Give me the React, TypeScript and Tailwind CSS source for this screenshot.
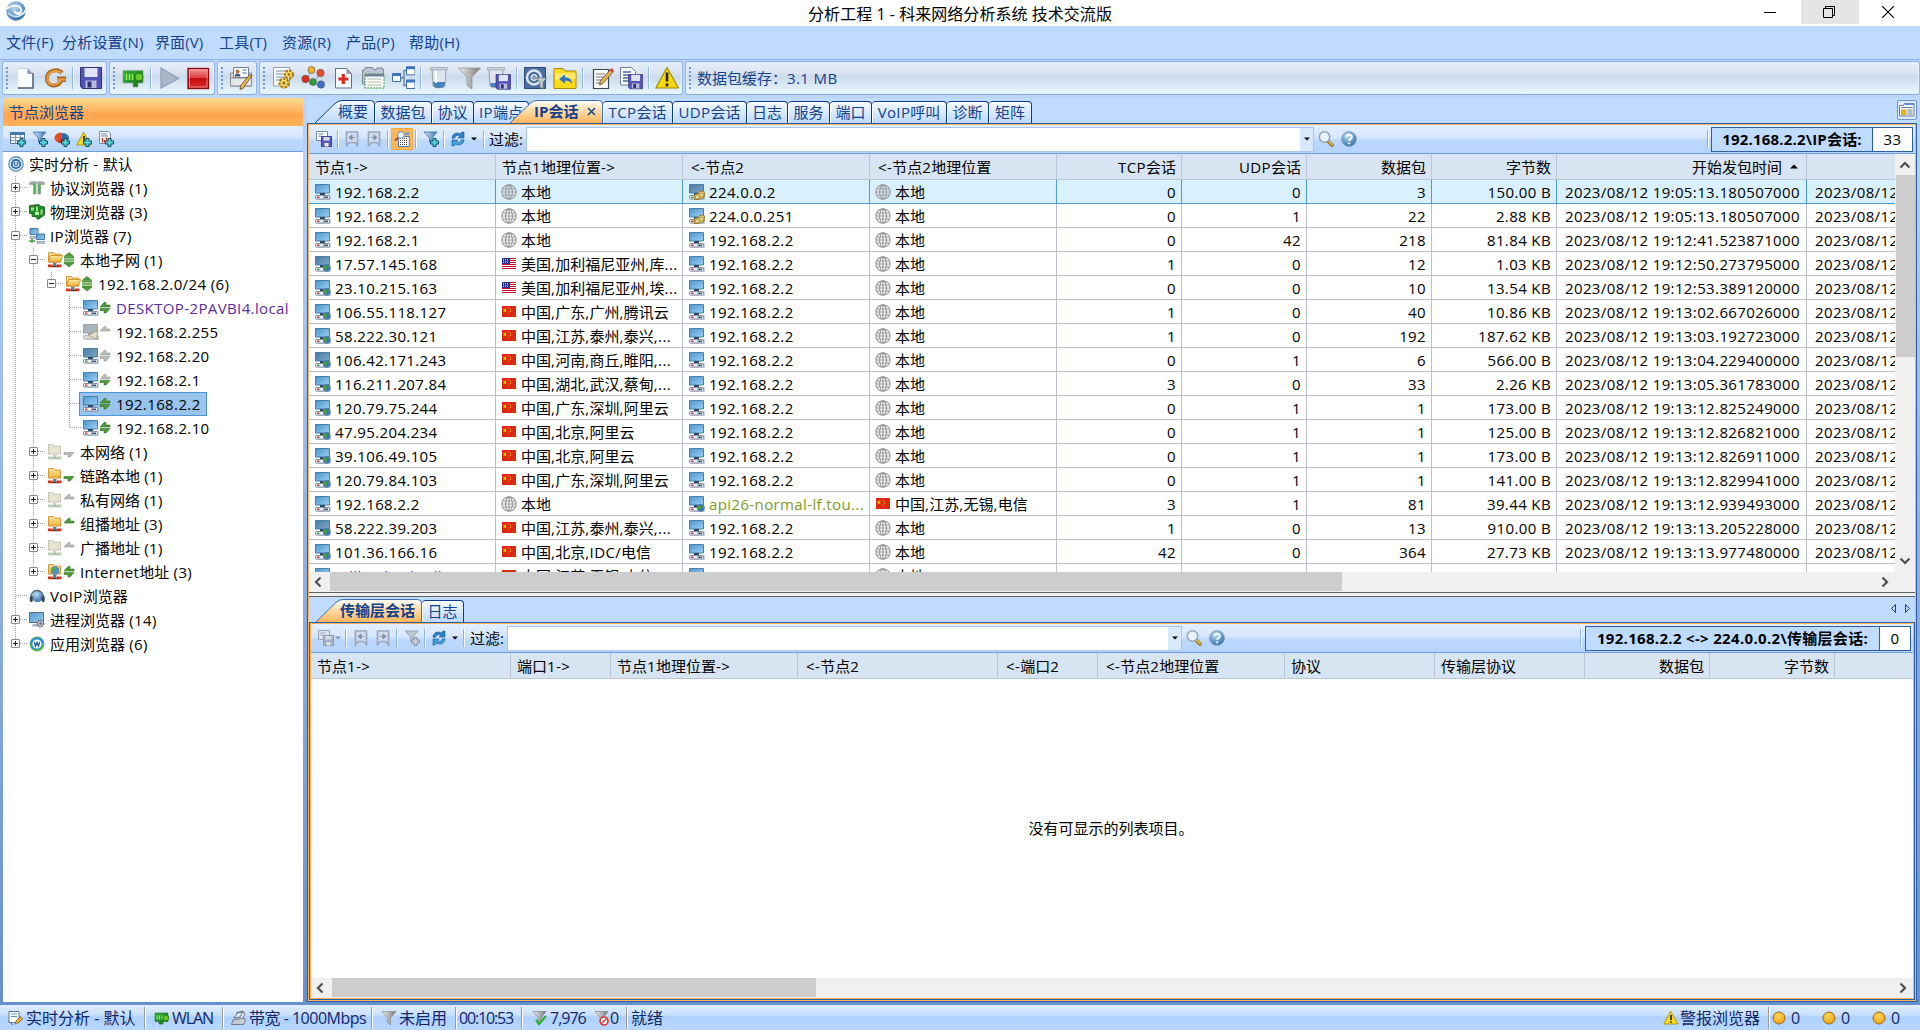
import React from 'react';

type P = { children?: React.ReactNode; className?: string };

/* Text run: Latin parts get slightly wider spacing than the CJK parts. */
function T({ children, className = '' }: { children: string; className?: string }) {
  const parts = children.match(/[\x20-\x7e]+|[^\x20-\x7e]+/g) || [];
  return (
    <span className={'whitespace-pre ' + className}>
      {parts.map((p, i) => (
        <span key={i} className={/[\x20-\x7e]/.test(p) ? 'tracking-[0.38px]' : ''}>{p}</span>
      ))}
    </span>
  );
}

const S16 = ({ children, className = '' }: P) => (
  <svg width="16" height="16" viewBox="0 0 16 16" className={'block shrink-0 ' + className}>{children}</svg>
);
const S24 = ({ children, className = '' }: P) => (
  <svg width="24" height="24" viewBox="0 0 24 24" className={'block shrink-0 ' + className}>{children}</svg>
);

function Defs() {
  return (
    <svg width="0" height="0" className="absolute">
      <defs>
        <linearGradient id="scr" x1="0" y1="0" x2="1" y2="1"><stop offset="0" stopColor="#4f97cc" /><stop offset="1" stopColor="#9ad0f5" /></linearGradient>
        <linearGradient id="scrDim" x1="0" y1="0" x2="1" y2="1"><stop offset="0" stopColor="#4a7ba3" /><stop offset="1" stopColor="#7ea9c8" /></linearGradient>
        <linearGradient id="gold" x1="0" y1="0" x2="0" y2="1"><stop offset="0" stopColor="#ffe9a0" /><stop offset="1" stopColor="#eeb035" /></linearGradient>
        <linearGradient id="red" x1="0" y1="0" x2="0" y2="1"><stop offset="0" stopColor="#f29a9a" /><stop offset=".48" stopColor="#dc3b3b" /><stop offset=".5" stopColor="#c40d12" /><stop offset="1" stopColor="#dd2b2b" /></linearGradient>
        <linearGradient id="tabO" x1="0" y1="0" x2="0" y2="1"><stop offset="0" stopColor="#fff" /><stop offset=".4" stopColor="#ffdfb0" /><stop offset="1" stopColor="#ffb65c" /></linearGradient>
        <linearGradient id="tabB" x1="0" y1="0" x2="0" y2="1"><stop offset="0" stopColor="#f2f8ff" /><stop offset="1" stopColor="#bcd9ff" /></linearGradient>
        <linearGradient id="fun" x1="0" y1="0" x2="1" y2="0"><stop offset="0" stopColor="#eee" /><stop offset="1" stopColor="#777" /></linearGradient>
        <linearGradient id="funB" x1="0" y1="0" x2="1" y2="0"><stop offset="0" stopColor="#d6ecff" /><stop offset="1" stopColor="#3b6fb0" /></linearGradient>
        <radialGradient id="orb" cx=".45" cy=".35" r=".7"><stop offset="0" stopColor="#ffd860" /><stop offset="1" stopColor="#f39a00" /></radialGradient>
        <radialGradient id="blu" cx=".4" cy=".3" r=".75"><stop offset="0" stopColor="#b7dcf6" /><stop offset="1" stopColor="#2f6ba8" /></radialGradient>
        <linearGradient id="card" x1="0" y1="0" x2="1" y2="1"><stop offset="0" stopColor="#35b53a" /><stop offset="1" stopColor="#0d6e16" /></linearGradient>
      </defs>
    </svg>
  );
}

/* ---------- small icons ---------- */
type PcKind = '' | 'dim' | 'globe' | 'dimglobe' | 'group' | 'dimgroup' | 'speaker';
function Pc({ k = '' }: { k?: PcKind }) {
  const gray = k === 'speaker';
  const dim = k.startsWith('dim');
  return (
    <S16>
      <path d="M3 11h13v5H3z" fill="#9aa3ad" opacity=".45" />
      <path d="M.5.5h14V9H.5z" fill={gray ? '#a9b3bd' : dim ? 'url(#scrDim)' : 'url(#scr)'} stroke={gray ? '#9aa4ae' : '#4b7ea8'} />
      <path d="M5 9h5v2.500H5z" fill={gray ? '#a0a0a0' : '#2f4a68'} />
      <rect x=".5" y="11.500" width="14" height="3.500" rx=".6" fill={gray ? '#dcdcdc' : '#f1f4f9'} stroke={gray ? '#b5b5b5' : '#7d8da6'} />
      {!gray && <><rect x="2" y="12.500" width="2.500" height="1.500" fill={dim ? '#3da04a' : '#e0362b'} /><rect x="8.500" y="12.500" width="4.500" height="1.500" fill="#43546e" /></>}
      {k.endsWith('globe') && <><circle cx="11.800" cy="11.800" r="3.700" fill="#3a74b8" stroke="#6a90b8" strokeWidth=".5" /><path d="M9 10c2-2 3 0 3 1s-1 3-2 3.500c-1-1-2-3-1-4.500zM13 9c2 1 2 3 1 4z" fill="#43a03c" /></>}
      {k.endsWith('group') && <><path d="M5 11.500l2-1.500 2 0 1.500-2.500 4-.5 1.300 2-.8 4.500-3.500.8-1.500 1.200H5.500z" fill="#e3c868" stroke="#8f6f1c" strokeWidth=".8" /><path d="M6.500 12h3.500v2.500H6.500zM11 9.500h3.500V12H11z" fill="#fff3b8" stroke="#957420" strokeWidth=".6" /></>}
      {gray && <path d="M7 9.500h2.500L14 6v10l-4.500-3H7z" fill="#e4ddc6" stroke="#988f78" strokeWidth=".7" />}
    </S16>
  );
}
const FolderNet = ({ off, net, open }: { off?: boolean; net?: boolean; open?: boolean }) => (
  <S16>
    <path d="M1.500.6h5l1 1.500h6v8h-12z" fill={off ? '#e6e2d4' : 'url(#gold)'} stroke={off ? '#c4bfae' : '#cf8d2c'} strokeWidth=".9" />
    {open && <path d="M1.500 10l2-6.500h12l-2 6.500z" fill="url(#gold)" stroke="#cf8d2c" strokeWidth=".9" />}
    {net && <><circle cx="8" cy="6.500" r="4" fill="#4a8fd0" stroke="#5c7fa8" strokeWidth=".5" /><path d="M5 5c1-2 4-2 4-1s-2 2-1.500 4c-1.500 1-3-1-2.500-3z" fill="#4bae4a" /></>}
    <rect x="6" y="11" width="3.500" height="3" fill={off ? '#c3cabf' : '#6d7c8d'} />
    <path d="M1 12.500h4.500v2.700H1zM10 12.500h4.500v2.700H10z" fill={off ? '#b4ccb0' : '#e02b1f'} />
    <path d="M5 14.500h5.500" stroke={off ? '#a5b8a2' : '#58392f'} strokeWidth="1.400" />
  </S16>
);
type Arr = 'gg' | 'u-' | 'uu' | 'ug' | '-g' | '-n' | 'g-' | 'G';
function Arrows({ a }: { a: Arr }) {
  const up = a === 'G' ? 'g' : a[0];
  const dn = a === 'G' ? 'g' : a[1];
  const c = (x: string) => (x === 'g' ? '#4f9a38' : '#b9bcb7');
  const one = a === 'G';
  return (
    <svg width="12" height="16" viewBox="0 0 12 16" className="block shrink-0">
      {one ? (
        <><path d="M6 .5L11 4.500H1zM6 15L1 11h10z" fill="#4f9a38" stroke="#2f7522" strokeWidth=".5" /><path d="M1 5.700h10M1 8h10M1 10.200h10" stroke="#4f9a38" strokeWidth="1.500" /></>
      ) : (
        <>
          {up !== '-' && <path d="M1 7l4-4.500h2V5h4v2z" fill={c(up)} stroke={up === 'g' ? '#2f7522' : '#999'} strokeWidth=".6" />}
          {dn !== '-' && <path d="M11 8.500L7 13H5v-2.500H1v-2z" fill={c(dn)} stroke={dn === 'g' ? '#2f7522' : '#999'} strokeWidth=".6" />}
        </>
      )}
    </svg>
  );
}
const Globe = () => (
  <S16><g fill="none" stroke="#9b9b9b" strokeWidth="1.150"><circle cx="8" cy="8" r="7.200" /><ellipse cx="8" cy="8" rx="3.400" ry="7.200" /><path d="M8 1v14M2 5h12M1 8h14M2 11h12" /></g></S16>
);
const Cn = () => (
  <S16><rect x="1" y="2" width="14" height="11" fill="#de2910" /><path d="M4 4l.6 1.500 1.600.1-1.200 1 .4 1.600L4 7.300l-1.400.9.400-1.600-1.200-1 1.600-.1z" fill="#ffd400" /><path d="M7.500 3.500h1v1h-1zM9 5h1v1H9zM9 7h1v1H9zM7.500 8.500h1v1h-1z" fill="#f3a712" /></S16>
);
const Us = () => (
  <S16><rect x="1" y="2" width="14" height="11" fill="#fff" /><path d="M1 2.500h14M1 4.500h14M1 6.500h14M1 8.500h14M1 10.500h14M1 12.500h14" stroke="#c8102e" /><rect x="1" y="2" width="8" height="6" fill="#1f2c8c" /><path d="M2 3.500h6M2 5h6M2 6.500h6" stroke="#fff" strokeWidth=".7" strokeDasharray="1 1" /></S16>
);
const Plus = ({ x = 8, y = 8, gray }: { x?: number; y?: number; gray?: boolean }) => (
  <path transform={`translate(${x} ${y})`} d="M2.500 0h3v2.500H8v3H5.500V8h-3V5.500H0v-3h2.500z" fill={gray ? '#c4ccd8' : '#58d0d8'} stroke={gray ? '#8590a3' : '#0b4f66'} strokeWidth="1" />
);
const FunnelPlus = ({ gray }: { gray?: boolean }) => (
  <S16><path d="M1 1h13L9 7v6l-2.500-2V7z" fill={gray ? '#bcc6d5' : 'url(#funB)'} stroke={gray ? '#94a0b5' : '#4176b5'} strokeWidth=".9" /><Plus x={7.500} y={7.500} gray={gray} /></S16>
);
const TablePlus = () => (
  <S16><path d="M.5 1.500h14v11H.5z" fill="#fff" stroke="#54779f" /><path d="M.5 1.500h14v2.500H.5z" fill="#3f78b5" /><path d="M.5 6.500h14M.5 9.500h14M5.500 4v8M10.500 4v8" stroke="#7794b5" strokeWidth=".9" /><Plus x={7.500} y={7.500} /></S16>
);
const PiePlus = () => (
  <S16><ellipse cx="8" cy="7" rx="7" ry="5" fill="#2e6cb5" /><path d="M8 7V2C4 1 .5 4 .5 7c0 2 2 4 4 4.500z" fill="#e34a26" /><path d="M8 7L4 11.500c2 .6 4 .6 6 0z" fill="#b02a10" /><Plus x={7.500} y={7.500} /></S16>
);
const WarnShape = () => (
  <><path d="M7.500 1.200L15 14H.8z" fill="#f7dc1b" stroke="#a89400" strokeWidth=".9" strokeLinejoin="round" /><path d="M8 5v5M8 11.300v1.400" stroke="#222" strokeWidth="1.700" /></>
);
const WarnPlus = () => <S16><WarnShape /><Plus x={7.500} y={7.500} /></S16>;
const ReportPlus = () => (
  <S16><path d="M1.500.5h9l2 2v10h-11z" fill="#f3f7fc" stroke="#7a8da8" /><path d="M3 3h6M3 5h7" stroke="#7a8da8" /><path d="M4.500 7v4.500M6.500 9v2.500M8.500 6.500v5" stroke="#c0392b" strokeWidth="1.300" /><Plus x={7.500} y={7.500} /></S16>
);
const SaveList = ({ gray }: { gray?: boolean }) => (
  <S16><path d="M.5.5h11v9H.5z" fill={gray ? '#dde4ee' : '#fff'} stroke={gray ? '#99a6ba' : '#7186a5'} /><path d="M2.500 3h5M2.500 5.200h3" stroke={gray ? '#99a6ba' : '#6f88a9'} /><path d="M5.500 5.500H15.500v10H5.500z" fill={gray ? '#a5b0c3' : '#5a5bb8'} stroke={gray ? '#8793a9' : '#33357f'} strokeWidth=".9" /><path d="M7.500 6h6v3.500h-6z" fill={gray ? '#d7deea' : '#d6dcf5'} /><path d="M8.500 12h4v3.500h-4z" fill={gray ? '#d7deea' : '#eef'} /></S16>
);
const Bookmark = ({ r }: { r?: boolean }) => (
  <S16><path d="M2.500 1h11v13.500l-3-3h-5l-3 3z" fill="#d2deef" stroke="#9aa7bd" strokeWidth="1.700" /><path d={r ? 'M5 6.500h4M8 4l3 2.500L8 9z' : 'M11 6.500H7M8 4L5 6.500 8 9z'} fill="#7f8ca5" stroke="#7f8ca5" strokeWidth=".9" /></S16>
);
const SearchTable = () => (
  <S16><path d="M4.500 5.500h10.800v10H4.500z" fill="#fff" stroke="#4e77b0" /><path d="M6 7.500h8M6 9.500h8M6 11.500h8M6 13.500h8" stroke="#444" strokeDasharray="1 1" /><path d="M11 1.500h4.500V4H11z" fill="#6ba0de" /><path d="M4.500 6.500L1 9.500" stroke="#8a5a20" strokeWidth="2" /><circle cx="7" cy="4" r="3.300" fill="#e3f1fd" stroke="#8d9cb0" strokeWidth="1.200" /></S16>
);
const Refresh = () => (
  <S16><path d="M2 7.200C2 3 6.500.8 10.300 2.700L12 1h2v6H8l1.800-1.900C7.500 3.900 5.200 4.800 4.600 7.200z" fill="#2d82c9" stroke="#17598f" strokeWidth=".6" /><path d="M14 8.800c0 4.200-4.500 6.400-8.300 4.500L4 15H2V9h6l-1.800 1.900c2.300 1.200 4.600.3 5.200-2.100z" fill="#3fa0dd" stroke="#17598f" strokeWidth=".6" /></S16>
);
const Lens = () => (
  <S16><path d="M10 10l4 4" stroke="#8f6a1c" strokeWidth="3.600" strokeLinecap="round" /><path d="M10.500 10l3.500 3.500" stroke="#e0b848" strokeWidth="2" strokeLinecap="round" /><circle cx="6.500" cy="6" r="5.200" fill="#e9f4ff" stroke="#97a3b4" strokeWidth="1.500" /></S16>
);
const Help = () => (
  <S16><circle cx="8" cy="8" r="7.500" fill="url(#blu)" stroke="#8ba5bf" strokeWidth=".9" /><path d="M5.300 6.300c0-3.400 5.500-3.400 5.500-.2 0 2-2.600 2-2.600 4M8.200 11.400v1.800" fill="none" stroke="#fff" strokeWidth="1.900" /></S16>
);
const FunnelPlain = () => <S16><path d="M1 1.500h14L9.500 8v7L6.500 12.500V8z" fill="url(#fun)" stroke="#888" strokeWidth=".6" /></S16>;
const Card = () => (
  <S16><path d="M1 3h13v8.500H9V14H5v-2.500H1z" fill="url(#card)" stroke="#196a1c" strokeWidth=".6" /><path d="M3 5.500v4M5.500 5.500v4M8 5.500v4" stroke="#8bee4f" strokeWidth="1.200" /><circle cx="12" cy="8" r="2.700" fill="#75c81f" stroke="#1f7a12" strokeWidth=".7" /></S16>
);

/* ---------- tree ---------- */
const icoAnalysis = (
  <S16><circle cx="8" cy="8" r="7.200" fill="#cfe3f5" stroke="#6f9bc8" strokeWidth="1.400" /><circle cx="8" cy="8" r="4.200" fill="none" stroke="#2d68a8" strokeWidth="1.800" /><path d="M6.500 5.500V8a1.500 1.500 0 003 0V5.500" stroke="#2d68a8" strokeWidth="1.200" fill="none" /></S16>
);
const icoProto = (
  <S16><path d="M.5 3C3 1 6 1.500 7 3v11H4.500V6c0-1.500-1-2-4-1.500zM15.500 3C13 1 10 1.500 9 3v11h2.500V6c0-1.500 1-2 4-1.500z" fill="#55b45c" stroke="#8a938c" strokeWidth=".7" /><path d="M.5 2.500c3-1.500 12-1.500 15 0v1.800c-3-1-12-1-15 0z" fill="#a5aba7" /></S16>
);
const icoPhys = (
  <S16><path d="M.5 1.500L10 .5l1 1.500 4.500 1v8L9 15.500 6 12.500H3V9.500H.5z" fill="#1f8a28" stroke="#0f5c17" strokeWidth=".8" /><path d="M2 3.500h3v3H2zM7 2.500h2v5H7zM11.500 5.500h2v5h-2z" fill="#9be07a" /><path d="M6 8h4v3H6z" fill="#bfe9ae" /><path d="M3 2h1M6 5h1" stroke="#d33" /></S16>
);
const icoIp = (
  <S16><path d="M1 .5h8v6H1z" fill="url(#scr)" stroke="#4a7ba8" /><path d="M7.500 6h8v5.500h-8z" fill="url(#scr)" stroke="#4a7ba8" /><path d="M1 8.500h6v1.800H1zM8 13.500h7.500v1.800H8z" fill="#c2cede" stroke="#70829b" strokeWidth=".6" /><path d="M0 13h6M3 10.500v4.500" stroke="#4e9e4a" strokeWidth="1.500" /></S16>
);
const icoVoip = (
  <S16><circle cx="8.500" cy="8.500" r="5.500" fill="url(#blu)" /><path d="M2 10C1 0 15 0 14.500 10" fill="none" stroke="#596470" strokeWidth="1.300" /><rect x=".8" y="8" width="3" height="6" rx="1.500" fill="#3c4754" /><rect x="12.700" y="8" width="3" height="6" rx="1.500" fill="#3c4754" /></S16>
);
const icoProc = (
  <S16><path d="M.5.5h14v10H.5z" fill="url(#scr)" stroke="#5a6f88" /><path d="M4 12h6v2.500H2.500z" fill="#aab4c0" /><circle cx="11.500" cy="11.500" r="3.200" fill="#c8ced6" stroke="#59626e" strokeWidth="1.500" strokeDasharray="1.500 .9" /><circle cx="11.500" cy="11.500" r="1.300" fill="#59626e" /></S16>
);
const icoApp = (
  <S16><circle cx="8" cy="8" r="7.400" fill="#5bb947" /><path d="M1 6C3 1 12-1 15 6l-3 6c-4 3-9 2-10-2z" fill="#2f8fd0" /><circle cx="8" cy="8" r="4.600" fill="#f4faff" /><path d="M5.300 6l1.200 4L8 6.500 9.500 10l1.200-4" fill="none" stroke="#2b5c86" strokeWidth="1.300" /></S16>
);

type Node = { g: string; icon: React.ReactNode; a?: Arr; t: string; color?: string; sel?: boolean };
/* Guide letters: I line, T branch, L last branch, + closed box, p last closed box, - open box, m last open box, blank */
const tree: Node[] = [
  { g: '', icon: icoAnalysis, t: '实时分析 - 默认' },
  { g: '+', icon: icoProto, t: '协议浏览器 (1)' },
  { g: '+', icon: icoPhys, t: '物理浏览器 (3)' },
  { g: '-', icon: icoIp, t: 'IP浏览器 (7)' },
  { g: 'I-', icon: <FolderNet open />, a: 'G', t: '本地子网 (1)' },
  { g: 'IIm', icon: <FolderNet open />, a: 'G', t: '192.168.2.0/24 (6)' },
  { g: 'II T', icon: <Pc />, a: 'gg', t: 'DESKTOP-2PAVBI4.local', color: 'text-[#5a2ca0]' },
  { g: 'II T', icon: <Pc k="speaker" />, a: 'u-', t: '192.168.2.255' },
  { g: 'II T', icon: <Pc k="dim" />, a: 'uu', t: '192.168.2.20' },
  { g: 'II T', icon: <Pc />, a: 'ug', t: '192.168.2.1' },
  { g: 'II T', icon: <Pc />, a: 'gg', t: '192.168.2.2', sel: true },
  { g: 'II L', icon: <Pc />, a: 'gg', t: '192.168.2.10' },
  { g: 'I+', icon: <FolderNet off />, a: '-n', t: '本网络 (1)' },
  { g: 'I+', icon: <FolderNet />, a: '-g', t: '链路本地 (1)' },
  { g: 'I+', icon: <FolderNet off />, a: 'u-', t: '私有网络 (1)' },
  { g: 'I+', icon: <FolderNet />, a: 'g-', t: '组播地址 (3)' },
  { g: 'I+', icon: <FolderNet off />, a: 'u-', t: '广播地址 (1)' },
  { g: 'Ip', icon: <FolderNet net />, a: 'gg', t: 'Internet地址 (3)' },
  { g: 'T', icon: icoVoip, t: 'VoIP浏览器' },
  { g: '+', icon: icoProc, t: '进程浏览器 (14)' },
  { g: 'p', icon: icoApp, t: '应用浏览器 (6)' },
];

function Guide({ c }: { c: string }) {
  const box = '+-pm'.includes(c);
  const last = 'Lpm'.includes(c);
  return (
    <svg width="18" height="24" viewBox="0 0 18 24" className="block shrink-0 overflow-visible">
      {c !== ' ' && <path d={last ? 'M9.500 0V12' : 'M9.500 0V24'} stroke="#9c9c9c" strokeDasharray="1 1" />}
      {c !== ' ' && c !== 'I' && <path d="M10 11.500H22" stroke="#9c9c9c" strokeDasharray="1 1" />}
      {box && (
        <>
          <rect x="5.500" y="7.500" width="8" height="8" rx=".5" fill="#fafafa" stroke="#8a8a8a" />
          <path d={'+p'.includes(c) ? 'M7 11.500h5M9.500 9v5' : 'M7 11.500h5'} stroke="#222" />
        </>
      )}
    </svg>
  );
}

function TreeRow({ n }: { n: Node }) {
  return (
    <div className="flex h-6 items-center pl-[3px]">
      {n.g.split('').map((c, i) => <Guide key={i} c={c} />)}
      <div className={'flex h-6 items-center border pr-[5px] ' + (n.g ? 'pl-[3px] ml-px ' : 'pl-px ') + (n.sel ? 'bg-[#99c4ec] border-[#4a98da]' : 'border-transparent')}>
        {n.icon}
        {n.a && <span><Arrows a={n.a} /></span>}
        <T className={'ml-[5px] ' + (n.color || '')}>{n.t}</T>
      </div>
    </div>
  );
}

/* ---------- main toolbar ---------- */
const Grip = () => <div className="ml-[3px] mr-[5px] h-[22px] w-[2px] bg-[repeating-linear-gradient(#6f9bd8_0_2px,transparent_2px_4px)]" />;
const Sep = () => <div className="mx-[5px] h-[22px] w-[2px] border-l border-[#8db8ee] bg-white" />;
const Group = ({ children, className = '' }: P) => (
  <div className={'flex h-[34px] items-center rounded-[3px] border border-[#8fb6e4] border-b-[#93acc8] bg-[linear-gradient(#e8effb_0%,#d7e1ef_38%,#cbdaec_45%,#dcebf7_78%,#e6f8fd_100%)] shadow-[inset_0_0_0_1px_#e3f1ff] ' + className}>{children}</div>
);
const floppy = (x: number, y: number, s: number) => (
  <g transform={`translate(${x} ${y}) scale(${s})`}><path d="M0 0h21v21H2L0 19z" fill="#5352b5" stroke="#31317c" /><path d="M4 .5h13v9H4z" fill="#dfe4f6" /><path d="M5 13h11v7.500H5z" fill="#b9bdd8" /><path d="M7 14h4v6H7z" fill="#2f3074" /></g>
);

function MainToolbar() {
  return (
    <div className="flex h-[34px] gap-[2px] pl-[2px]">
      <Group className="w-[105px]">
        <Grip />
        <S24><path d="M5 2.500h10l5 5V22H5z" fill="#fafcff" /><path d="M5 2.500h10l5 5" fill="none" stroke="#c3cddb" /><path d="M20 7v15H5" fill="none" stroke="#4f5b6c" strokeWidth="1.500" /><path d="M14.500 2.500l5.500 5.500h-5.500z" fill="#8b9aae" /></S24>
        <S24 className="ml-[6px]"><path d="M19 7C15 2 4 4 4 12.500S15 22 18.500 14H23M23 12.500h-9" fill="none" stroke="#a4631a" strokeWidth="4" /><path d="M18.500 7C14.500 3 4.500 5 4.500 12.500S14.500 21 18 13.500h4.500H14" fill="none" stroke="#e39a45" strokeWidth="2.300" /></S24>
        <Sep />
        <S24>{floppy(1.500, 1.500, 1)}</S24>
      </Group>
      <Group className="w-[106px]">
        <Grip />
        <S24 className="ml-px"><path d="M2 4.500h20v12.500h-5V21h-5v-4H2z" fill="url(#card)" stroke="#8aa58a" strokeWidth=".8" /><path d="M5.500 8v6M8.500 8v6M11.500 8v6" stroke="#8ef04c" strokeWidth="1.500" /><circle cx="18" cy="11" r="4" fill="#6cc825" stroke="#1c7a18" /></S24>
        <Sep />
        <S24><path d="M4 2l17.500 10.500L4 22z" fill="#a9b7c9" stroke="#8d9eb5" strokeWidth="1.200" /></S24>
        <S24 className="ml-[5px]"><rect x="2" y="2.500" width="20.500" height="20" fill="url(#red)" stroke="#8c0d10" strokeWidth="1.400" /><rect x="3.500" y="4" width="17.500" height="17" fill="none" stroke="#f6b0b0" strokeWidth=".7" /></S24>
      </Group>
      <Group className="w-[40px]">
        <Grip />
        <S24 className="ml-px"><path d="M1.500 7h21v13h-21z" fill="#dcdcdc" stroke="#8a8a8a" /><path d="M4.500 1.500h15v10h-15z" fill="#fff" stroke="#6f8099" /><circle cx="8.500" cy="5.500" r="2" fill="#b86f3c" /><path d="M5.500 10.500c0-4 6-4 6 0z" fill="#44566e" /><path d="M13.500 4h4M13.500 7h4" stroke="#3d68a8" /><path d="M1.500 12h21v8h-21z" fill="#e8e8e8" stroke="#8a8a8a" /><path d="M23 9.500L14 22.500l-3 .8.5-3.500 9-11z" fill="#e9b74f" stroke="#5c4221" strokeWidth=".8" /></S24>
      </Group>
      <Group className="w-[424px]">
        <Grip />
        <S24 className="ml-px"><path d="M2.500 1.500h16V20h-16z" fill="#f6f9fd" stroke="#90a0b5" /><path d="M5 5h11M5 8h11M5 11h9M5 14h6" stroke="#7890ad" /><circle cx="18" cy="8.500" r="4" fill="#f4dc6c" stroke="#ad7f0e" strokeWidth="2.200" strokeDasharray="2.500 1.200" /><circle cx="13" cy="17" r="4.500" fill="#f4dc6c" stroke="#ad7f0e" strokeWidth="2.300" strokeDasharray="2.700 1.200" /><circle cx="13" cy="17" r="1.500" fill="#8e6a10" /><circle cx="18" cy="8.500" r="1.300" fill="#8e6a10" /></S24>
        <S24 className="ml-[6px]"><path d="M11 4L5 14l7 3 8-10M12 17l8 3" stroke="#999" fill="none" /><g strokeWidth=".6" stroke="#555"><circle cx="10.500" cy="4" r="3.500" fill="#f0b31e" /><circle cx="19.500" cy="7" r="3.700" fill="#e4502e" /><circle cx="4.500" cy="13" r="3.700" fill="#dd2a20" /><circle cx="12" cy="16" r="3.500" fill="#2f9a3a" /><circle cx="20" cy="18.500" r="3.700" fill="#3e6fd0" /></g></S24>
        <S24 className="ml-[6px]"><path d="M4.500 2.500h11l5 5V22h-16z" fill="#fafcff" stroke="#627389" /><path d="M15.500 2.500V8h5z" fill="#8d9bb0" /><path d="M12.300 8v10M7.300 13h10" stroke="#dc2c22" strokeWidth="3.200" /></S24>
        <S24 className="ml-[6px]"><path d="M1.500 4h1.500l1.500-2.500h7L13 4h1.500l1-2h6l1 2V18h-21z" fill="#b9c4d2" stroke="#7a8798" /><path d="M4 8h19v14H4z" fill="#fff" stroke="#3c9a3c" strokeDasharray="2 1" /><path d="M4 8h19v2.500H4z" fill="#6d8198" /><path d="M6.500 13h14M6.500 16h14M6.500 19h14" stroke="#a9bd9d" strokeWidth="1.200" /></S24>
        <S24 className="ml-[6px]"><path d="M9 12h4V4.500h3M13 12v7.500h3" fill="none" stroke="#5d7ea8" strokeWidth="1.300" /><g fill="#fff" stroke="#3f6fae"><path d="M1.500 7.500h8v8h-8zM15.500.8h8.500v8h-8.500zM15.500 14h8.500v8.500h-8.500z" /></g><path d="M1.500 7.500h8V10h-8zM15.500.8h8.500v2.500h-8.500zM15.500 14h8.500v2.500h-8.500z" fill="#3b74c4" /></S24>
        <Sep />
        <S24><path d="M5 2.500h14l-1 17c-.5 3-11.500 3-12 0z" fill="#dfe6ed" stroke="#97a3b0" /><path d="M3.500 1.500h17v2.500h-17z" fill="#c7ced6" stroke="#9ba5b1" strokeWidth=".7" /><path d="M6 16h12l-.5 4c-1 2.500-10 2.500-11 0z" fill="#4a7fbe" /><path d="M9 5v12" stroke="#fff" strokeWidth="2" /></S24>
        <S24 className="ml-[6px]"><path d="M1.500 2h22L15 11v12l-5-3.500V11z" fill="url(#fun)" stroke="#979797" strokeWidth=".8" /></S24>
        <S24 className="ml-[6px]"><path d="M2 2.500h14l-1 17c-.5 3-11.500 3-12 0z" fill="#dfe6ed" stroke="#97a3b0" /><path d="M.5 1.500h17v2.500H.5z" fill="#c7ced6" stroke="#9ba5b1" strokeWidth=".7" /><path d="M3 17h8v4H4z" fill="#4a7fbe" />{floppy(9, 8.500, 0.7)}</S24>
        <Sep />
        <S24><path d="M1.500 1.500h21v21h-21z" fill="#4d6f9e" stroke="#2b4b7c" /><circle cx="11" cy="11.500" r="7" fill="none" stroke="#dbe6f3" strokeWidth="2.500" /><circle cx="11" cy="11.500" r="3" fill="#8ba4c4" stroke="#fff" /><path d="M13 12h11l-4 4v7l-3-2v-5z" fill="#c5ccd5" stroke="#6d7784" strokeWidth=".7" /></S24>
        <S24 className="ml-[6px]"><path d="M1 2.500h9l2 2.500h11v17.500H1z" fill="#ffd91c" stroke="#a88b06" /><path d="M2 7h20.500v6L2 14z" fill="#ffe968" /><path d="M6 13l6-4.500v2.700c5 0 7 3 7 6.500-2-2.500-4-3-7-3V17.500z" fill="#2f71c8" /></S24>
        <Sep />
        <S24 className="ml-px"><path d="M3.500 3.500h15V22.500h-15z" fill="#fdfdfd" stroke="#3c4653" strokeWidth="1.200" /><path d="M6 8h9M6 11h9M6 14h7M6 17h6" stroke="#777" /><path d="M21 3l2.500 2.500L13 17.500 9.500 19l.8-4z" fill="#e2b24c" stroke="#5a4526" strokeWidth=".8" /><path d="M19 4l3-2 2 2.500-2 2z" fill="#c9504c" /></S24>
        <S24 className="ml-[5px]"><path d="M1.500 1.500h11l4 4V19h-15z" fill="#fdfdfd" stroke="#6f7f96" /><path d="M4 6h8M4 9h9M4 12h9M4 15h5" stroke="#48689a" strokeWidth="1.300" />{floppy(9.500, 8.500, 0.68)}</S24>
        <Sep />
        <S24><path d="M12 1.500L23.500 22H.8z" fill="#f5d90f" stroke="#a08c00" strokeWidth="1.200" strokeLinejoin="round" /><path d="M12 6.500v9M12 17.500v2.700" stroke="#222" strokeWidth="2.600" /></S24>
      </Group>
      <Group className="flex-1"><Grip /><T className="ml-px text-[#15428b]">数据包缓存：3.1 MB</T></Group>
    </div>
  );
}

/* ---------- tabs ---------- */
function Tab({ t, w }: { t: string; w: string }) {
  return (
    <div className={'flex h-[22px] shrink-0 items-center justify-center rounded-t-[4px] border border-b-0 border-l-0 border-[#0a3a91] bg-[linear-gradient(#f4f9ff,#bcd9ff)] pb-px shadow-[inset_1px_1px_0_#fff] text-[#15428b] ' + w}>
      <T>{t}</T>
    </div>
  );
}
function SlantTab({ w, wc, active, children, className = '' }: { w: number; wc: string; active?: boolean } & P) {
  return (
    <div className={'relative z-10 h-[23px] shrink-0 text-[#15428b] ' + wc + ' ' + className}>
      <svg width={w} height="23" className="absolute left-0 top-0"><path d={`M0 23L20 3.500Q23 .5 27 .5H${w - 4.5}Q${w - 0.5} .5 ${w - 0.5} 4V23`} fill={active ? 'url(#tabO)' : 'url(#tabB)'} stroke={active ? '#3f6fb5' : '#0a3a91'} /></svg>
      <div className="relative flex h-[22px] items-center">{children}</div>
    </div>
  );
}

/* ---------- filter toolbars ---------- */
const FSep = ({ className = '' }: P) => <div className={'h-[18px] w-[2px] shrink-0 border-l border-[#8ab4ec] bg-white ' + className} />;
const Caret = ({ className = '', c = '#000' }: { className?: string; c?: string }) => (
  <svg width="6" height="4" viewBox="0 0 6 4" className={'block shrink-0 ' + className}><path d="M0 .5h6L3 3.500z" fill={c} /></svg>
);
const FilterInput = ({ className = '' }: P) => (
  <div className={'flex h-[25px] shrink-0 items-stretch border border-[#a9c6ec] bg-white ' + className}>
    <div className="flex-1" />
    <div className="flex w-[13px] items-center justify-center bg-[#d8e8fd]"><Caret /></div>
  </div>
);
const Badge = ({ a, b, aw, bw }: { a: string; b: string; aw: string; bw: string }) => (
  <div className="flex h-[25px] shrink-0 border border-[#2f5f9f] text-black">
    <div className={'flex items-center justify-center whitespace-pre border-r border-[#2f5f9f] bg-[#bfdbff] font-bold ' + aw}>{a}</div>
    <div className={'flex items-center justify-center bg-white ' + bw}><T>{b}</T></div>
  </div>
);
const barBg = 'bg-[linear-gradient(#e3efff_0%,#d5e6fe_45%,#bcd8fd_55%,#b6d4fc_100%)] border-b border-[#6f9ddb]';

/* ---------- tables ---------- */
const cols = ['w-[187px]', 'w-[187px]', 'w-[187px]', 'w-[187px]', 'w-[125px]', 'w-[125px]', 'w-[125px]', 'w-[125px]', 'w-[250px]', 'w-[89px]'];
type Row = [PcKind, string, 'L' | 'C' | 'U', string, PcKind, string, 'L' | 'C', string, string, string, string, string, string];
const rows: Row[] = [
  ['', '192.168.2.2', 'L', '本地', 'dimgroup', '224.0.0.2', 'L', '本地', '0', '0', '3', '150.00 B', '19:05:13.180507000'],
  ['', '192.168.2.2', 'L', '本地', 'group', '224.0.0.251', 'L', '本地', '0', '1', '22', '2.88 KB', '19:05:13.180507000'],
  ['', '192.168.2.1', 'L', '本地', '', '192.168.2.2', 'L', '本地', '0', '42', '218', '81.84 KB', '19:12:41.523871000'],
  ['dimglobe', '17.57.145.168', 'U', '美国,加利福尼亚州,库...', '', '192.168.2.2', 'L', '本地', '1', '0', '12', '1.03 KB', '19:12:50.273795000'],
  ['globe', '23.10.215.163', 'U', '美国,加利福尼亚州,埃...', '', '192.168.2.2', 'L', '本地', '0', '0', '10', '13.54 KB', '19:12:53.389120000'],
  ['globe', '106.55.118.127', 'C', '中国,广东,广州,腾讯云', '', '192.168.2.2', 'L', '本地', '1', '0', '40', '10.86 KB', '19:13:02.667026000'],
  ['globe', '58.222.30.121', 'C', '中国,江苏,泰州,泰兴,...', '', '192.168.2.2', 'L', '本地', '1', '0', '192', '187.62 KB', '19:13:03.192723000'],
  ['dimglobe', '106.42.171.243', 'C', '中国,河南,商丘,睢阳,...', '', '192.168.2.2', 'L', '本地', '0', '1', '6', '566.00 B', '19:13:04.229400000'],
  ['globe', '116.211.207.84', 'C', '中国,湖北,武汉,蔡甸,...', '', '192.168.2.2', 'L', '本地', '3', '0', '33', '2.26 KB', '19:13:05.361783000'],
  ['globe', '120.79.75.244', 'C', '中国,广东,深圳,阿里云', '', '192.168.2.2', 'L', '本地', '0', '1', '1', '173.00 B', '19:13:12.825249000'],
  ['globe', '47.95.204.234', 'C', '中国,北京,阿里云', '', '192.168.2.2', 'L', '本地', '0', '1', '1', '125.00 B', '19:13:12.826821000'],
  ['globe', '39.106.49.105', 'C', '中国,北京,阿里云', '', '192.168.2.2', 'L', '本地', '0', '1', '1', '173.00 B', '19:13:12.826911000'],
  ['globe', '120.79.84.103', 'C', '中国,广东,深圳,阿里云', '', '192.168.2.2', 'L', '本地', '0', '1', '1', '141.00 B', '19:13:12.829941000'],
  ['', '192.168.2.2', 'L', '本地', 'globe', 'api26-normal-lf.tou...', 'C', '中国,江苏,无锡,电信', '3', '1', '81', '39.44 KB', '19:13:12.939493000'],
  ['dimglobe', '58.222.39.203', 'C', '中国,江苏,泰州,泰兴,...', '', '192.168.2.2', 'L', '本地', '1', '0', '13', '910.00 B', '19:13:13.205228000'],
  ['globe', '101.36.166.16', 'C', '中国,北京,IDC/电信', '', '192.168.2.2', 'L', '本地', '42', '0', '364', '27.73 KB', '19:13:13.977480000'],
  ['globe', 'mllb.sdns.ksyll.com', 'C', '中国,江苏,无锡,电信', '', '192.168.2.2', 'L', '本地', '1', '0', '24', '4.11 KB', '19:13:14.105228000'],
];
const Flag = ({ k }: { k: 'L' | 'C' | 'U' }) => (k === 'L' ? <Globe /> : k === 'C' ? <Cn /> : <Us />);

function DataRow({ r, sel, purple }: { r: Row; sel: boolean; purple: boolean }) {
  const line = sel ? 'border-[#4f9ad8]' : 'border-[#b9c1d0]';
  const cell = 'flex h-6 shrink-0 items-center overflow-hidden border-r border-b pt-px ' + line + ' ';
  return (
    <div className={'flex ' + (sel ? 'bg-[#d9f1ff]' : 'bg-white')}>
      <div className={cell + 'pl-[6px] ' + cols[0]}><Pc k={r[0]} /><T className={'ml-[4px] ' + (purple ? 'text-[#7a2a8c]' : '')}>{r[1]}</T></div>
      <div className={cell + 'pl-[5px] ' + cols[1]}><Flag k={r[2]} /><T className="ml-[4px]">{r[3]}</T></div>
      <div className={cell + 'pl-[6px] ' + cols[2]}><Pc k={r[4]} /><T className={'ml-[4px] ' + (r[5].startsWith('api') ? 'text-[#7d9b1f]' : '')}>{r[5]}</T></div>
      <div className={cell + 'pl-[5px] ' + cols[3]}><Flag k={r[6]} /><T className="ml-[4px]">{r[7]}</T></div>
      {[8, 9, 10, 11].map((i) => (
        <div key={i} className={cell + 'justify-end pr-[5px] ' + cols[i - 4]}><T>{r[i] as string}</T></div>
      ))}
      <div className={cell + 'justify-end pr-[6px] ' + cols[8]}><T>{'2023/08/12 ' + r[12]}</T></div>
      <div className={cell + 'border-r-0 pl-[8px] ' + cols[9]}><T>2023/08/12</T></div>
    </div>
  );
}

const heads = ['节点1->', '节点1地理位置->', '<-节点2', '<-节点2地理位置', 'TCP会话', 'UDP会话', '数据包', '字节数', '开始发包时间', ''];
const heads2: [string, string, boolean][] = [
  ['节点1->', 'w-[200px]', false], ['端口1->', 'w-[100px]', false], ['节点1地理位置->', 'w-[187px]', false], ['<-节点2', 'w-[200px]', false],
  ['<-端口2', 'w-[100px]', false], ['<-节点2地理位置', 'w-[187px]', false], ['协议', 'w-[150px]', false], ['传输层协议', 'w-[150px]', false],
  ['数据包', 'w-[125px]', true], ['字节数', 'w-[125px]', true],
];
const headCell = 'flex h-[26px] shrink-0 items-center border-r border-b border-[#b9c6d8] ';
const headPad = (h: string) => (h.startsWith('<') ? ' pl-[8px]' : ' pl-[6px]');

const Chev = ({ d }: { d: string }) => <svg width="12" height="12" viewBox="0 0 12 12" className="block"><path d={d} fill="none" stroke="#505050" strokeWidth="2.200" /></svg>;
const chL = 'M8.500 1.500L4 6l4.500 4.500', chR = 'M3.500 1.500L8 6l-4.500 4.500', chU = 'M1.500 8.500L6 4l4.500 4.500', chD = 'M1.500 3.500L6 8l4.500-4.500';

function HScroll({ thumb, className = '' }: { thumb: string; className?: string }) {
  return (
    <div className={'flex shrink-0 items-center bg-[#f0f0f0] ' + className}>
      <div className="flex w-[21px] shrink-0 justify-center pr-1"><Chev d={chL} /></div>
      <div className={'h-[19px] shrink-0 self-start bg-[#cdcdcd] ' + thumb} />
      <div className="flex-1" />
      <div className="flex w-[21px] justify-center"><Chev d={chR} /></div>
    </div>
  );
}

/* ---------- status bar ---------- */
const StSep = ({ className = '' }: P) => <div className={'h-[22px] w-[2px] shrink-0 border-l border-[#9a9a9a] bg-white ' + className} />;
const St = ({ children, className = '' }: { children: string; className?: string }) => <span className={'shrink-0 whitespace-pre ' + className}>{children}</span>;
const Orb = () => <svg width="14" height="14" viewBox="0 0 14 14" className="block"><circle cx="7" cy="7" r="6" fill="url(#orb)" stroke="#96701c" /></svg>;

export default function App() {
  return (
    <div className="flex h-[1030px] w-[1920px] flex-col overflow-hidden bg-white font-['Open_Sans','Noto_Sans_CJK_SC',sans-serif] text-[15px] leading-[20px] text-black">
      <Defs />
      {/* title bar */}
      <div className="flex h-[26px] shrink-0 items-start">
        <div className="w-[600px] pl-[6px] pt-px">
          <svg width="20" height="20" viewBox="0 0 20 20"><circle cx="10" cy="10" r="9.700" fill="url(#blu)" /><path d="M1 8c5-5 12-4 14 0s-4 5-7 2c3 5 11 4 11-1" fill="none" stroke="#fff" strokeWidth="1.700" /><path d="M2 12c4 4 10 5 15 1" fill="none" stroke="#d5e9f8" strokeWidth="1.500" /></svg>
        </div>
        <div className="flex-1 pt-[4px] text-center text-[16px] tracking-[0.04px]">分析工程 1 - 科来网络分析系统 技术交流版</div>
        <div className="flex h-6 w-[600px] justify-end">
          <div className="flex w-[58px] items-center justify-center pr-[2px]"><div className="h-px w-3 bg-black" /></div>
          <div className="ml-px flex w-[58px] items-center justify-center bg-[#e5e5e5]"><svg width="12" height="12" viewBox="0 0 12 12" className="mr-[2px]"><path d="M.5 2.500h9v9h-9zM2.500 2V.5h9v9H10" fill="none" stroke="#000" /></svg></div>
          <div className="flex w-[61px] items-center justify-center pr-[3px]"><svg width="12" height="12" viewBox="0 0 12 12"><path d="M0 0l12 12M12 0L0 12" fill="none" stroke="#000" strokeWidth="1.100" /></svg></div>
        </div>
      </div>
      {/* menu */}
      <div className="flex h-[34px] shrink-0 items-center border-b border-[#8fb3e6] bg-[#bfdbff] pb-[2px] pl-[6px] text-[#15428b]">
        <span className="w-[56px] tracking-[0.2px]">文件(F)</span><span className="w-[93px] tracking-[0.2px]">分析设置(N)</span><span className="w-[64px] tracking-[0.1px]">界面(V)</span><span className="w-[63px] tracking-[0.2px]">工具(T)</span><span className="w-[64px] tracking-[0.2px]">资源(R)</span><span className="w-[63px] tracking-[0.2px]">产品(P)</span><span className="tracking-[0.2px]">帮助(H)</span>
      </div>
      <div className="flex h-[38px] shrink-0 flex-col justify-center bg-[#b9d5fb]"><div className="-mt-[2px]"><MainToolbar /></div></div>

      {/* body */}
      <div className="flex h-[907px] shrink-0 bg-[linear-gradient(#b8d5fc,#6690cd)] pl-[3px]">
        {/* left panel */}
        <div className="mb-[3px] flex w-[300px] flex-col bg-white">
          <div className="flex h-[28px] items-center bg-[linear-gradient(#ffd98e_0%,#ffb766_42%,#ffa44f_60%,#ffb35c_100%)] pl-[6px] text-[#15428b]">节点浏览器</div>
          <div className={'flex h-[26px] items-center gap-[6px] pl-[7px] ' + barBg}><TablePlus /><FunnelPlus /><PiePlus /><WarnPlus /><ReportPlus /></div>
          <div>{tree.map((n, i) => <TreeRow key={i} n={n} />)}</div>
        </div>

        {/* right area */}
        <div className="ml-1 flex w-[1610px] flex-col">
          <div className="flex h-[25px] items-end bg-[#bfdbff] pl-[8px]">
            <SlantTab w={60} wc="w-[60px]"><T className="pl-[23px]">概要</T></SlantTab>
            <Tab w="w-[57px]" t="数据包" /><Tab w="w-[42px]" t="协议" />
            <div className="flex h-[22px] w-[55px] shrink-0 items-center overflow-hidden rounded-t-[4px] border-t border-r border-[#0a3a91] bg-[linear-gradient(#f4f9ff,#bcd9ff)] pb-px pl-[5px] text-[#15428b]"><T>IP端点</T></div>
            <SlantTab w={93} wc="w-[93px]" active className="-ml-[19px]"><span className="pl-[24px] font-bold">IP会话</span><svg width="9" height="9" viewBox="0 0 9 9" className="ml-[9px]"><path d="M1 1l7 7M8 1L1 8" stroke="#15428b" strokeWidth="1.500" /></svg></SlantTab>
            <Tab w="w-[70px]" t="TCP会话" /><Tab w="w-[74px]" t="UDP会话" /><Tab w="w-[41px]" t="日志" /><Tab w="w-[42px]" t="服务" /><Tab w="w-[42px]" t="端口" /><Tab w="w-[75px]" t="VoIP呼叫" /><Tab w="w-[42px]" t="诊断" /><Tab w="w-[43px]" t="矩阵" />
            <div className="mb-[3px] ml-auto flex h-[20px] w-[20px] items-center justify-center rounded-[2px] border border-[#6d93c8] bg-[#dbe9fb]"><S16><path d="M.5 3.500h4l1-2h9.500v12.500H.5z" fill="#f1f5fb" stroke="#6d83a3" /><path d="M6 1.500h9V3H6z" fill="#5c8edb" /><path d="M2.500 5.500h11M8.500 8h5M8.500 10h5M8.500 12h5" stroke="#6d83a3" /><rect x="2.500" y="8" width="4.500" height="4.500" fill="#f3b519" stroke="#c4850a" strokeWidth=".6" /></S16></div>
          </div>

          <div className="flex h-[879px] flex-col border border-[#2d5ea5]">
            <div className="flex flex-1 flex-col border border-[#ffb55f] bg-[#f0f0f0]">
              <div className={'flex h-[29px] shrink-0 items-center pl-[7px] ' + barBg}>
                <SaveList /><FSep className="ml-[5px]" /><span className="ml-[5px]"><Bookmark /></span><span className="ml-[6px]"><Bookmark r /></span><FSep className="ml-[5px]" />
                <div className="ml-[2px] flex h-[22px] w-[22px] shrink-0 items-center justify-center border border-[#ffab3f] bg-[#ffb75e]"><SearchTable /></div>
                <FSep className="ml-[2px]" /><span className="ml-[6px]"><FunnelPlus /></span><FSep className="ml-[4px]" /><span className="ml-[5px]"><Refresh /></span><Caret className="ml-[5px]" /><FSep className="ml-[6px]" />
                <span className="ml-[4px] w-[37px] shrink-0 whitespace-pre">过滤:</span>
                <FilterInput className="w-[788px]" />
                <span className="ml-[4px]"><Lens /></span><span className="ml-[7px]"><Help /></span>
                <FSep className="ml-auto mr-[2px]" />
                <div className="mr-[2px] tracking-[0.2px]"><Badge a="192.168.2.2\IP会话:" b="33" aw="w-[161px]" bw="w-[39px]" /></div>
              </div>
              <div className="flex h-[418px] shrink-0">
                <div className="w-[1586px] shrink-0 overflow-hidden bg-white">
                  <div className="flex bg-[#d7e4f2]">
                    {heads.map((h, i) => (
                      <div key={i} className={headCell + cols[i] + (i > 3 ? ' justify-end pr-[5px]' : headPad(h)) + (i === 9 ? ' border-r-0' : '')}>
                        <T>{h}</T>
                        {i === 8 && <svg width="8" height="5" viewBox="0 0 8 5" className="ml-[8px] mr-[3px]"><path d="M0 4.500h8L4 .5z" /></svg>}
                      </div>
                    ))}
                  </div>
                  {rows.map((r, i) => <DataRow key={i} r={r} sel={i === 0} purple={i === 16} />)}
                </div>
                <div className="flex w-[20px] flex-col items-center">
                  <div className="flex h-[21px] items-center"><Chev d={chU} /></div>
                  <div className="h-[182px] w-[19px] bg-[#cdcdcd]" />
                  <div className="flex-1" />
                  <div className="mb-[5px]"><Chev d={chD} /></div>
                </div>
              </div>
              <HScroll className="h-[20px] pr-[20px]" thumb="w-[1012px]" />
              <div className="h-[5px] shrink-0 border-y border-[#5f5f5f] bg-[#f0f0f0]" />

              {/* lower pane */}
              <div className="flex h-[25px] shrink-0 items-end bg-[#bfdbff] pl-[7px]">
                <SlantTab w={106} wc="w-[106px]" active><span className="pl-[24px] font-bold">传输层会话</span></SlantTab>
                <Tab w="w-[42px]" t="日志" />
                <svg width="20" height="9" viewBox="0 0 20 9" className="mb-[9px] ml-auto mr-[4px]"><path d="M4.500 .5v8L.5 4.500zM14.500 .5v8l4-4z" fill="none" stroke="#15428b" /></svg>
              </div>
              <div className="flex flex-1 flex-col border border-[#2d5ea5]">
                <div className="flex flex-1 flex-col border border-[#ffb55f] bg-white">
                  <div className={'flex h-[29px] shrink-0 items-center pl-[7px] ' + barBg}>
                    <SaveList gray /><Caret className="ml-px" c="#8590a3" /><FSep className="ml-[4px]" /><span className="ml-[6px]"><Bookmark /></span><span className="ml-[6px]"><Bookmark r /></span><FSep className="ml-[5px]" />
                    <span className="ml-[6px]"><FunnelPlus gray /></span><FSep className="ml-[4px]" /><span className="ml-[5px]"><Refresh /></span><Caret className="ml-[5px]" /><FSep className="ml-[5px]" />
                    <span className="ml-[5px] w-[37px] shrink-0 whitespace-pre">过滤:</span>
                    <FilterInput className="w-[675px]" />
                    <span className="ml-[4px]"><Lens /></span><span className="ml-[7px]"><Help /></span>
                    <FSep className="ml-auto mr-[3px]" />
                    <div className="mr-[2px] tracking-[0.32px]"><Badge a="192.168.2.2 <-> 224.0.0.2\传输层会话:" b="0" aw="w-[294px]" bw="w-[30px]" /></div>
                  </div>
                  <div className="flex h-[26px] shrink-0 bg-[#d7e4f2]">
                    {heads2.map(([h, w, right], i) => (
                      <div key={i} className={headCell + w + (right ? ' justify-end pr-[5px]' : headPad(h))}><T>{h}</T></div>
                    ))}
                    <div className="flex-1 border-b border-[#b9c6d8]" />
                  </div>
                  <div className="flex flex-1 justify-center pt-[139px]"><span className="ml-[-2px]">没有可显示的列表项目。</span></div>
                  <HScroll className="h-[20px]" thumb="w-[484px]" />
                </div>
              </div>
            </div>
          </div>
        </div>
      </div>

      {/* status bar */}
      <div className="flex h-[25px] shrink-0 items-center bg-[linear-gradient(#e0edff_0%,#c9e0ff_40%,#aed1ff_48%,#b8d8ff_100%)] pl-[7px] text-[16px] text-[#12286b]">
        <S16><path d="M2 1.500h10v11H2z" fill="#fff" stroke="#5c79a5" /><path d="M4 4h6M4 6.500h6" stroke="#5b8bd0" /><path d="M8 14l1-3 4.500-4.500L15.500 9 11 13z" fill="#f0ae3c" stroke="#7a5318" strokeWidth=".7" /><path d="M1 11l5 4" stroke="#6a7fa0" /></S16>
        <St className="ml-[3px] w-[119px]">实时分析 - 默认</St><StSep className="-ml-px" />
        <span className="ml-[8px]"><Card /></span><St className="ml-[2px] w-[50px] tracking-[-1.1px]">WLAN</St><StSep />
        <span className="ml-[6px]"><S16><path d="M3 10L14 8l1.500 3-2 3.500H1.500z" fill="#c8ccd2" stroke="#5b6470" strokeWidth=".8" /><path d="M4 8l6-1 3-5-5 .5zM6 3l7-2 2 3-2 4" fill="#e9edf2" stroke="#5b6470" strokeWidth=".9" /></S16></span>
        <St className="ml-[3px] w-[122px] tracking-[-0.5px]">带宽 - 1000Mbps</St><StSep />
        <span className="ml-[8px]"><FunnelPlain /></span><St className="ml-[2px] w-[56px]">未启用</St><StSep /><St className="ml-[2px] w-[62px] tracking-[-1.15px]">00:10:53</St><StSep />
        <span className="ml-[9px]"><S16><path d="M1 1.500h13L9 8v5L6.500 11V8z" fill="url(#fun)" stroke="#777" strokeWidth=".6" /><path d="M4 10l3 4 7-8" fill="none" stroke="#2fae2f" strokeWidth="2.200" /></S16></span>
        <St className="ml-[2px] w-[44px] tracking-[-1px]">7,976</St>
        <S16><path d="M1 1.500h13L9 8v5L6.500 11V8z" fill="url(#fun)" stroke="#777" strokeWidth=".6" /><circle cx="10" cy="11" r="4" fill="#fff" stroke="#e0352a" strokeWidth="1.600" /><path d="M7.500 13.500l5-5" stroke="#e0352a" strokeWidth="1.500" /></S16>
        <St className="w-[16px]">0</St><StSep /><St className="ml-[3px]">就绪</St>
        <div className="ml-auto flex w-[257px] items-center">
          <S16><WarnShape /></S16><St className="ml-px w-[88px]">警报浏览器</St><StSep />
          <div className="ml-[2px] flex">
            {[0, 1, 2].map((i) => <div key={i} className="flex w-[50px] items-center"><Orb /><St className="ml-[5px]">0</St></div>)}
          </div>
        </div>
      </div>
    </div>
  );
}
